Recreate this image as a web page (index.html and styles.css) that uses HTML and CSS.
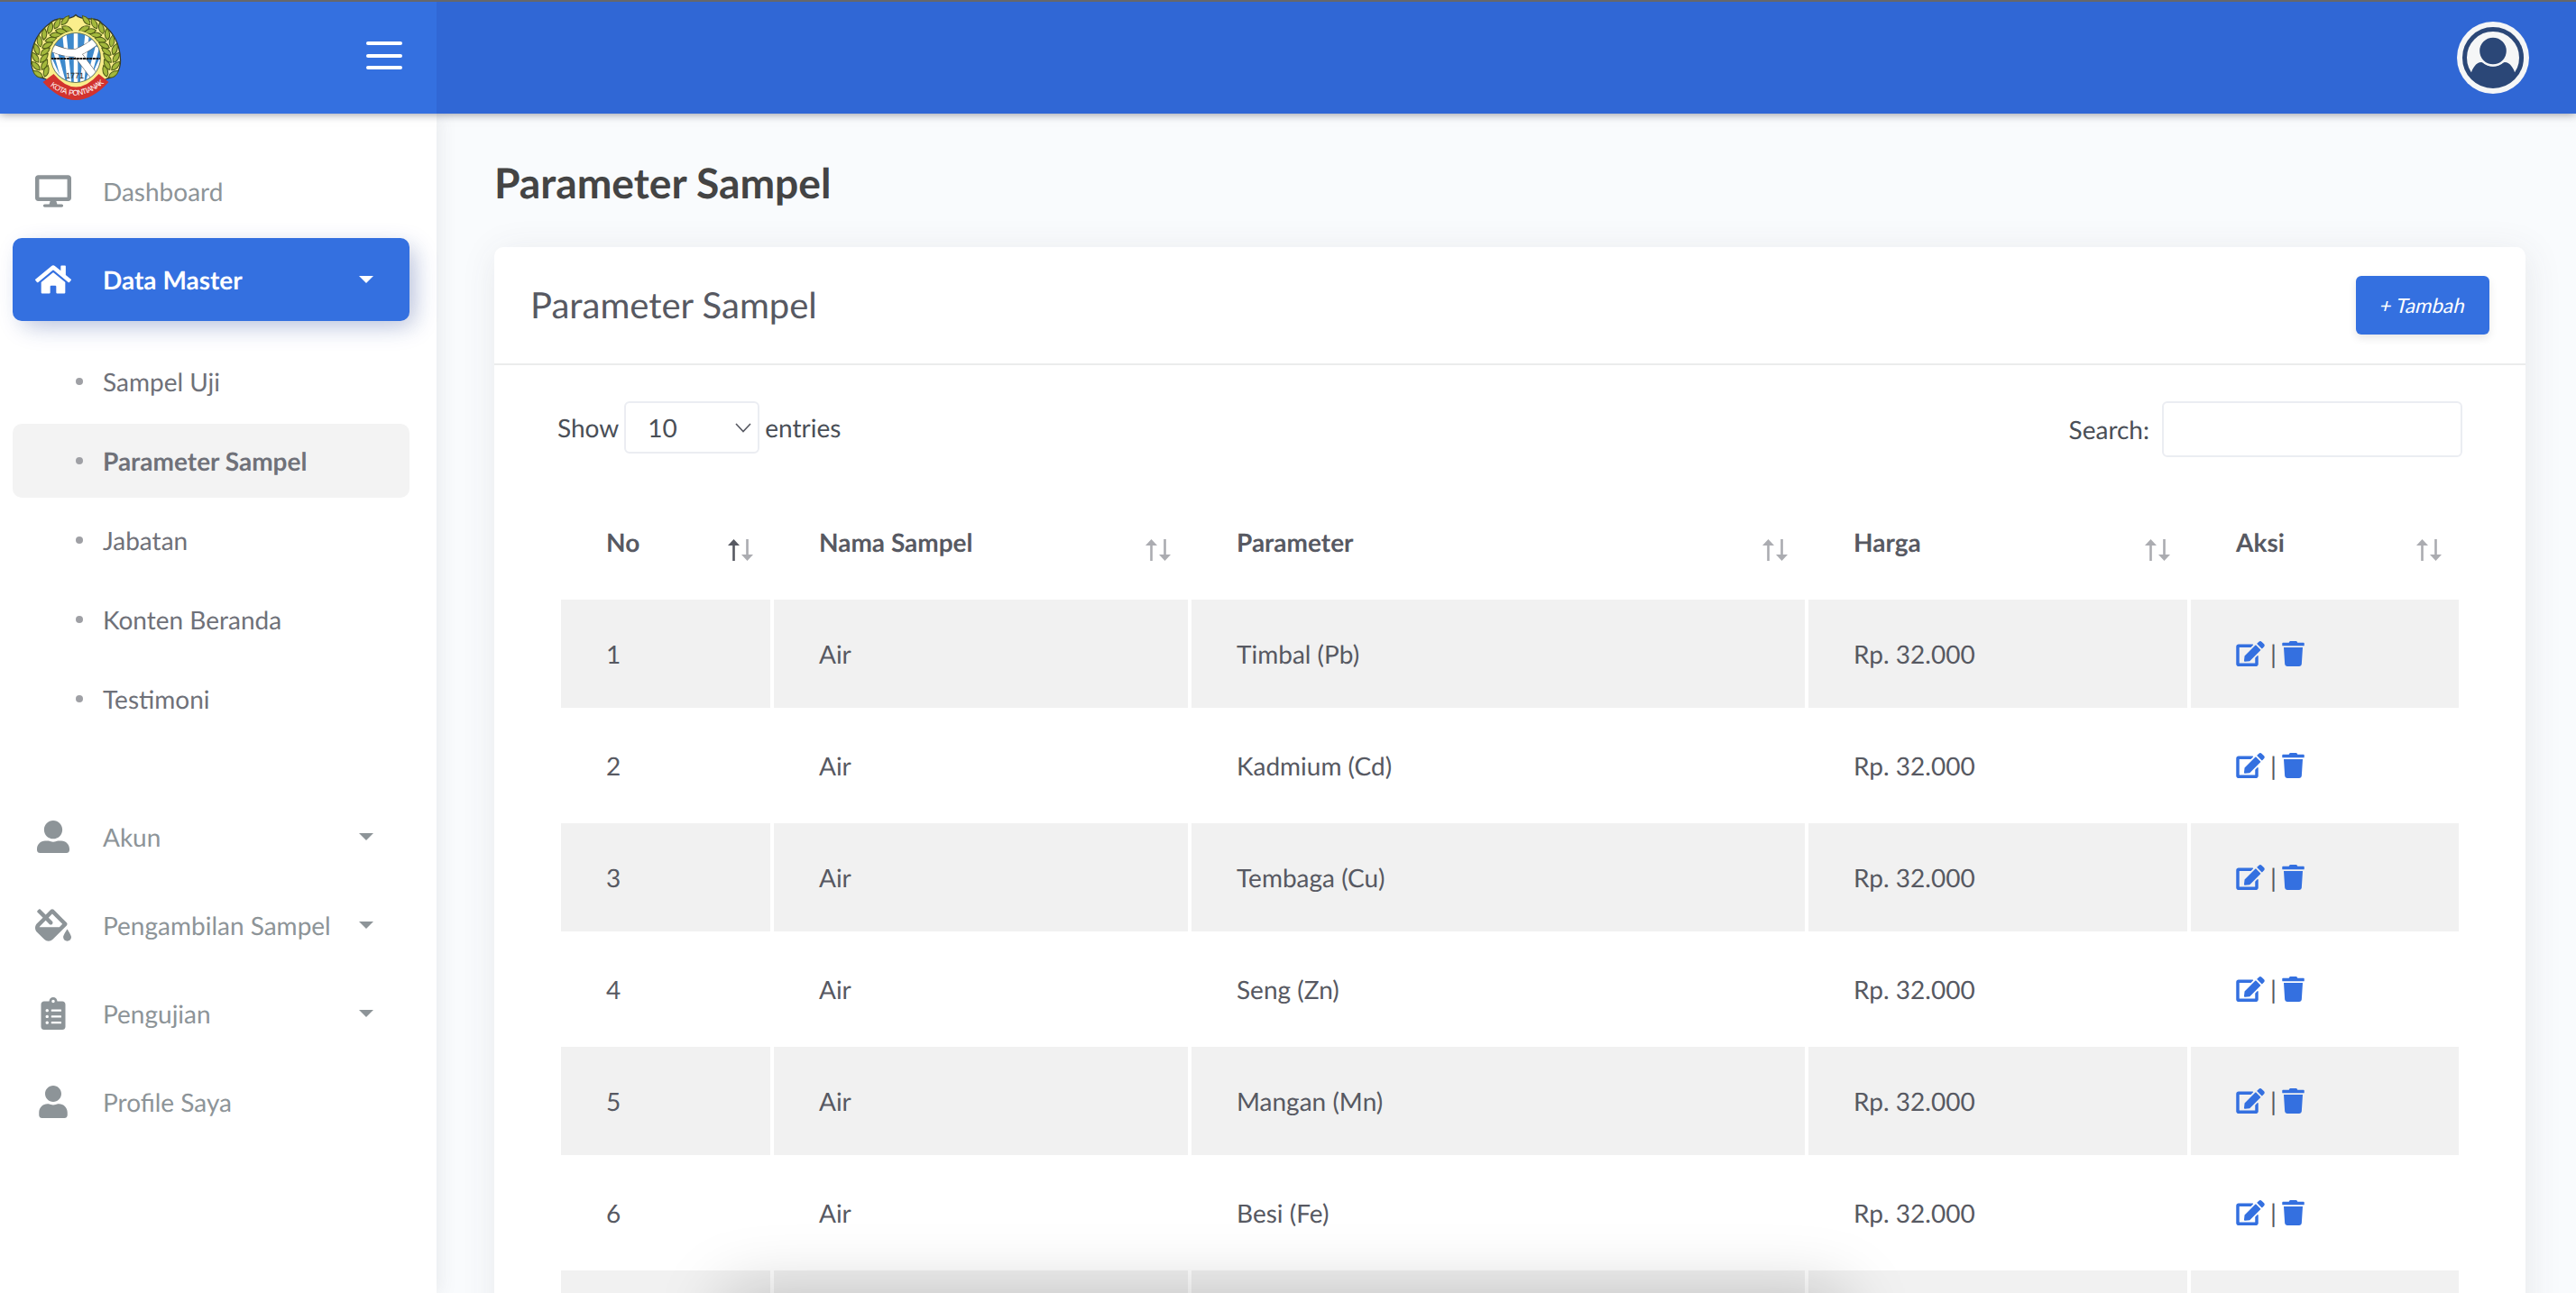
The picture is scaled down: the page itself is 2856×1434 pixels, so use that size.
FILE: index.html
```html
<!DOCTYPE html>
<html lang="id">
<head>
<meta charset="utf-8">
<title>Parameter Sampel</title>
<link rel="stylesheet" href="styles.css">
</head>
<body>
<svg class="defs" width="0" height="0" aria-hidden="true">
  <symbol id="i-desktop" viewBox="0 0 576 512"><path d="M528 0H48C21.5 0 0 21.5 0 48v320c0 26.5 21.5 48 48 48h192l-16 48h-72c-13.3 0-24 10.7-24 24s10.7 24 24 24h272c13.3 0 24-10.7 24-24s-10.7-24-24-24h-72l-16-48h192c26.5 0 48-21.5 48-48V48c0-26.5-21.5-48-48-48zm-16 352H64V64h448v288z"/></symbol>
  <symbol id="i-home" viewBox="0 0 576 512"><path d="M280.37 148.26L96 300.11V464a16 16 0 0 0 16 16l112.06-.29a16 16 0 0 0 15.92-16V368a16 16 0 0 1 16-16h64a16 16 0 0 1 16 16v95.64a16 16 0 0 0 16 16.05L464 480a16 16 0 0 0 16-16V300L295.67 148.26a12.19 12.19 0 0 0-15.3 0zM571.6 251.47L488 182.56V44.05a12 12 0 0 0-12-12h-56a12 12 0 0 0-12 12v72.61L318.47 43a48 48 0 0 0-61 0L4.34 251.47a12 12 0 0 0-1.6 16.9l25.5 31A12 12 0 0 0 45.15 301l235.22-193.74a12.19 12.19 0 0 1 15.3 0L530.9 301a12 12 0 0 0 16.9-1.6l25.5-31a12 12 0 0 0-1.7-16.93z"/></symbol>
  <symbol id="i-user-alt" viewBox="0 0 512 512"><path d="M256 288c79.5 0 144-64.5 144-144S335.5 0 256 0 112 64.5 112 144s64.5 144 144 144zm128 32h-55.1c-22.2 10.2-46.9 16-72.9 16s-50.6-5.8-72.9-16H128C57.3 320 0 377.3 0 448v16c0 26.5 21.5 48 48 48h416c26.5 0 48-21.5 48-48v-16c0-70.7-57.3-128-128-128z"/></symbol>
  <symbol id="i-user" viewBox="0 0 448 512"><path d="M224 256c70.7 0 128-57.3 128-128S294.7 0 224 0 96 57.3 96 128s57.3 128 128 128zm89.6 32h-16.7c-22.2 10.2-46.9 16-72.9 16s-50.6-5.8-72.9-16h-16.7C60.2 288 0 348.2 0 422.4V464c0 26.5 21.5 48 48 48h352c26.5 0 48-21.5 48-48v-41.6c0-74.2-60.2-134.4-134.4-134.4z"/></symbol>
  <symbol id="i-fill" viewBox="0 0 576 512"><path d="M512 320s-64 92.65-64 128c0 35.35 28.66 64 64 64s64-28.65 64-64-64-128-64-128zm-9.37-102.94L294.94 9.37C288.69 3.12 280.5 0 272.31 0s-16.38 3.12-22.62 9.37l-81.58 81.58L81.93 4.76c-6.25-6.25-16.38-6.25-22.62 0L36.69 27.38c-6.24 6.25-6.24 16.38 0 22.62l86.19 86.18-94.76 94.76c-37.49 37.48-37.49 98.26 0 135.75l117.19 117.19c18.74 18.74 43.31 28.12 67.87 28.12 24.57 0 49.13-9.37 67.87-28.12l221.57-221.57c12.5-12.5 12.5-32.75.01-45.25zm-116.22 70.97H65.93c1.36-3.84 3.57-7.98 7.43-11.83l13.15-13.15 81.61-81.61 58.6 58.6c12.49 12.49 32.75 12.49 45.24 0s12.49-32.75 0-45.24l-58.6-58.6 58.95-58.95 162.44 162.44-48.34 48.34z"/></symbol>
  <symbol id="i-clipboard" viewBox="0 0 384 512"><path d="M336 64h-80c0-35.3-28.7-64-64-64s-64 28.7-64 64H48C21.5 64 0 85.5 0 112v352c0 26.5 21.5 48 48 48h288c26.5 0 48-21.5 48-48V112c0-26.5-21.5-48-48-48zM96 424c-13.3 0-24-10.7-24-24s10.7-24 24-24 24 10.7 24 24-10.7 24-24 24zm0-96c-13.3 0-24-10.7-24-24s10.7-24 24-24 24 10.7 24 24-10.7 24-24 24zm0-96c-13.3 0-24-10.7-24-24s10.7-24 24-24 24 10.7 24 24-10.7 24-24 24zm96-192c13.3 0 24 10.7 24 24s-10.7 24-24 24-24-10.7-24-24 10.7-24 24-24zm128 368c0 4.4-3.6 8-8 8H168c-4.4 0-8-3.6-8-8v-16c0-4.4 3.6-8 8-8h144c4.4 0 8 3.6 8 8v16zm0-96c0 4.4-3.6 8-8 8H168c-4.4 0-8-3.6-8-8v-16c0-4.4 3.6-8 8-8h144c4.4 0 8 3.6 8 8v16zm0-96c0 4.4-3.6 8-8 8H168c-4.4 0-8-3.6-8-8v-16c0-4.4 3.6-8 8-8h144c4.4 0 8 3.6 8 8v16z"/></symbol>
  <symbol id="i-edit" viewBox="0 0 576 512"><path d="M402.6 83.2l90.2 90.2c3.8 3.8 3.8 10 0 13.8L274.4 405.6l-92.8 10.3c-12.4 1.4-22.9-9.1-21.5-21.5l10.3-92.8L388.8 83.2c3.8-3.8 10-3.8 13.8 0zm162-22.9l-48.8-48.8c-15.2-15.2-39.9-15.2-55.2 0l-35.4 35.4c-3.8 3.8-3.8 10 0 13.8l90.2 90.2c3.8 3.8 10 3.8 13.8 0l35.4-35.4c15.2-15.3 15.2-40 0-55.2zM384 346.2V448H64V128h229.8c3.2 0 6.2-1.3 8.5-3.5l40-40c7.6-7.6 2.2-20.5-8.5-20.5H48C21.5 64 0 85.5 0 112v352c0 26.5 21.5 48 48 48h352c26.5 0 48-21.5 48-48V306.2c0-10.7-12.9-16-20.5-8.5l-40 40c-2.2 2.3-3.5 5.3-3.5 8.5z"/></symbol>
  <symbol id="i-trash" viewBox="0 0 448 512"><path d="M432 32H312l-9.4-18.7A24 24 0 0 0 281.1 0H166.8a23.72 23.72 0 0 0-21.4 13.3L136 32H16A16 16 0 0 0 0 48v32a16 16 0 0 0 16 16h416a16 16 0 0 0 16-16V48a16 16 0 0 0-16-16zM53.2 467a48 48 0 0 0 47.9 45h245.8a48 48 0 0 0 47.9-45L416 128H32z"/></symbol>
  <symbol id="i-sort" viewBox="0 0 28 24"><path class="up" d="M6.5 0L13 7H7.8V24H5.2V7H0z"/><path class="down" d="M21.5 24L28 17H22.8V0H20.2V17H15z"/></symbol>
</svg>

<header class="topbar">
  <div class="brand">
    <svg class="crest" viewBox="34 15 101 97">
      <defs>
        <path id="leaf" d="M0 0C2-4 8-5 13-2C9 2 4 3 0 0z" fill="#a3b83c" stroke="#4c5a17" stroke-width="1"/>
        <g id="twig"><use href="#leaf" transform="translate(78 25) rotate(-28)"/><use href="#leaf" transform="translate(78 27) scale(1 -1) rotate(-28)"/></g>
        <g id="wreath">
          <use href="#twig" transform="rotate(-14 84 66)"/><use href="#twig" transform="rotate(-26 84 66)"/><use href="#twig" transform="rotate(-38 84 66)"/><use href="#twig" transform="rotate(-50 84 66)"/><use href="#twig" transform="rotate(-62 84 66)"/><use href="#twig" transform="rotate(-74 84 66)"/><use href="#twig" transform="rotate(-86 84 66)"/><use href="#twig" transform="rotate(-98 84 66)"/><use href="#twig" transform="rotate(-110 84 66)"/>
        </g>
        <clipPath id="disc"><circle cx="84" cy="64" r="27"/></clipPath>
        <path id="ribbon-arc" d="M54 94Q84 119 117 91"/>
      </defs>
      <path d="M84 16.500C87 20 92 20.500 100 21C106 21 111 23 113 26C125 35 133 49 133.500 66C134 78 128 85 119 87L84 104L49 87C40 85 34 78 34.500 66C35 49 43 35 55 26C58 23 62 21 68 21C76 20.500 81 20 84 16.500z" fill="#faee8c" stroke="#33392b" stroke-width="1.300"/>
      <use href="#wreath"/>
      <use href="#wreath" transform="translate(168 0) scale(-1 1)"/>
      <circle cx="84" cy="64" r="30" fill="#faee8c"/>
      <circle cx="84" cy="64" r="27.500" fill="#3d89cc" stroke="#6b6f3d" stroke-width=".8"/>
      <g clip-path="url(#disc)" stroke="#fff" stroke-width="4.500" fill="none">
        <path d="M84 34V92M71 34L77 92M97 34L91 92M60 52L71 92M108 52L97 92M54 62L66 88M114 62L102 88"/>
        <path d="M57 53Q76 61 86 58Q98 53 108 44" stroke="#555" stroke-width="9"/>
        <path d="M86 60L104 84" stroke="#555" stroke-width="9"/>
        <path d="M57 53Q76 61 86 58Q98 53 108 44M86 60L104 84" stroke-width="8"/>
        <path d="M56 65H112" stroke="#111" stroke-width="1.800" stroke-dasharray="3 .6"/>
      </g>
      <text x="83" y="86.500" text-anchor="middle" class="crest-year">1771</text>
      <path d="M59.500 82Q84 111 109.500 82L120.500 91Q84 131 47.500 91z" fill="#d2332e"/>
      <text class="crest-name" xml:space="preserve"><textPath href="#ribbon-arc" startOffset="2" textLength="66">KOTA  PONTIANAK</textPath></text>
    </svg>
    <button class="burger" aria-label="Menu"><span></span><span></span><span></span></button>
  </div>
  <div class="navbar">
    <svg class="avatar" viewBox="0 0 80 80">
      <circle cx="40" cy="40" r="40" fill="#f5f6f7"/>
      <circle cx="40" cy="40" r="31.500" fill="none" stroke="#2b4777" stroke-width="5"/>
      <path d="M15 59C17 52 21 45 27 45C30 45 32 49.500 40 49.500S50 45 53 45C59 45 63 52 65 59A33 33 0 0 1 15 59z" fill="#2b4777"/>
      <circle cx="40" cy="32.500" r="16" fill="#2b4777" stroke="#f5f6f7" stroke-width="2.400"/>
    </svg>
  </div>
</header>

<div class="shell">
  <nav class="sidebar">
    <a class="item"><span class="ico"><svg width="40" height="36"><use href="#i-desktop"/></svg></span><span class="label">Dashboard</span></a>
    <a class="item active"><span class="ico"><svg width="40" height="36"><use href="#i-home"/></svg></span><span class="label">Data Master</span><i class="caret"></i></a>
    <div class="sub">
      <a class="subitem">Sampel Uji</a>
      <a class="subitem current">Parameter Sampel</a>
      <a class="subitem">Jabatan</a>
      <a class="subitem">Konten Beranda</a>
      <a class="subitem">Testimoni</a>
    </div>
    <a class="item"><span class="ico"><svg width="36" height="36"><use href="#i-user-alt"/></svg></span><span class="label">Akun</span><i class="caret"></i></a>
    <a class="item"><span class="ico"><svg width="40" height="36"><use href="#i-fill"/></svg></span><span class="label">Pengambilan Sampel</span><i class="caret"></i></a>
    <a class="item"><span class="ico"><svg width="28" height="36"><use href="#i-clipboard"/></svg></span><span class="label">Pengujian</span><i class="caret"></i></a>
    <a class="item"><span class="ico"><svg width="32" height="36"><use href="#i-user"/></svg></span><span class="label">Profile Saya</span></a>
  </nav>

  <main class="content">
    <h1 class="page-title">Parameter Sampel</h1>
    <section class="card">
      <div class="card-head">
        <h2 class="card-title">Parameter Sampel</h2>
        <button class="btn"><span>+ Tambah</span></button>
      </div>
      <div class="controls">
        <div class="length">Show <span class="select">10<svg width="18" height="11" viewBox="0 0 18 11"><path d="M1 1L9 9.500L17 1" fill="none" stroke="#575962" stroke-width="1.600"/></svg></span> entries</div>
        <label class="search">Search:<input type="text"></label>
      </div>
      <table class="table">
        <colgroup><col class="c-no"><col class="c-name"><col class="c-param"><col class="c-price"><col class="c-act"></colgroup>
        <thead>
          <tr>
            <th><div class="th asc">No<svg width="28" height="24"><use href="#i-sort"/></svg></div></th>
            <th><div class="th">Nama Sampel<svg width="28" height="24"><use href="#i-sort"/></svg></div></th>
            <th><div class="th">Parameter<svg width="28" height="24"><use href="#i-sort"/></svg></div></th>
            <th><div class="th">Harga<svg width="28" height="24"><use href="#i-sort"/></svg></div></th>
            <th><div class="th">Aksi<svg width="28" height="24"><use href="#i-sort"/></svg></div></th>
          </tr>
        </thead>
        <tbody>
          <tr><td>1</td><td>Air</td><td>Timbal (Pb)</td><td>Rp. 32.000</td><td><div class="acts"><svg width="32" height="28"><use href="#i-edit"/></svg><span>|</span><svg width="25" height="28"><use href="#i-trash"/></svg></div></td></tr>
          <tr><td>2</td><td>Air</td><td>Kadmium (Cd)</td><td>Rp. 32.000</td><td><div class="acts"><svg width="32" height="28"><use href="#i-edit"/></svg><span>|</span><svg width="25" height="28"><use href="#i-trash"/></svg></div></td></tr>
          <tr><td>3</td><td>Air</td><td>Tembaga (Cu)</td><td>Rp. 32.000</td><td><div class="acts"><svg width="32" height="28"><use href="#i-edit"/></svg><span>|</span><svg width="25" height="28"><use href="#i-trash"/></svg></div></td></tr>
          <tr><td>4</td><td>Air</td><td>Seng (Zn)</td><td>Rp. 32.000</td><td><div class="acts"><svg width="32" height="28"><use href="#i-edit"/></svg><span>|</span><svg width="25" height="28"><use href="#i-trash"/></svg></div></td></tr>
          <tr><td>5</td><td>Air</td><td>Mangan (Mn)</td><td>Rp. 32.000</td><td><div class="acts"><svg width="32" height="28"><use href="#i-edit"/></svg><span>|</span><svg width="25" height="28"><use href="#i-trash"/></svg></div></td></tr>
          <tr><td>6</td><td>Air</td><td>Besi (Fe)</td><td>Rp. 32.000</td><td><div class="acts"><svg width="32" height="28"><use href="#i-edit"/></svg><span>|</span><svg width="25" height="28"><use href="#i-trash"/></svg></div></td></tr>
          <tr><td></td><td></td><td></td><td></td><td></td></tr>
        </tbody>
      </table>
    </section>
  </main>
</div>
<div class="dock-shadow"></div>
</body>
</html>
```
FILE: styles.css
```css
* { box-sizing: border-box; }

html, body { height: 100%; }

body {
  margin: 0;
  display: flex;
  flex-direction: column;
  position: relative;
  overflow: hidden;
  border-top: 2px solid #66676b;
  background: #f9fbfd;
  color: #575962;
  font: 28px/42px Lato, "Liberation Sans", sans-serif;
  text-rendering: geometricPrecision;
}

.defs { position: absolute; }
svg { display: block; fill: currentColor; flex: none; }

.topbar {
  position: relative;
  z-index: 3;
  display: flex;
  flex: none;
  height: 124px;
  box-shadow: 0 0 10px rgba(18, 23, 39, .5);
}
.brand {
  display: flex;
  justify-content: space-between;
  width: 484px;
  padding: 13px 38px 0 34px;
  background: #3470e0;
}
.crest { width: 101px; height: 97px; }
.crest-year { font: 9px "Liberation Sans", sans-serif; fill: #222; }
.crest-name { font: 8.500px "Liberation Sans", sans-serif; fill: #fff; white-space: pre; }
.burger {
  display: flex;
  flex-direction: column;
  gap: 9.600px;
  width: 40px;
  height: 32px;
  margin-top: 31px;
  padding: 0;
  border: 0;
  background: none;
}
.burger span { height: 4px; border-radius: 2px; background: #fff; }
.navbar {
  flex: 1;
  display: flex;
  justify-content: flex-end;
  padding: 22px 52px 0 0;
  background: #3067d5;
}
.avatar { width: 80px; height: 80px; }

.shell { display: flex; flex: 1; min-height: 0; }

.sidebar {
  position: relative;
  z-index: 1;
  flex: none;
  width: 484px;
  padding: 40px 30px 0 14px;
  background: #fff;
  box-shadow: 2px 2px 20px rgba(69, 65, 78, .1);
}
.item {
  display: flex;
  align-items: center;
  height: 92px;
  margin-bottom: 6px;
  padding-right: 40px;
  border-radius: 10px;
  color: #8d9498;
}
.ico { display: flex; justify-content: center; flex: none; width: 90px; margin-right: 10px; padding-bottom: 1px; }
.label { flex: 1; white-space: nowrap; }
.item.active {
  background: #3470e0;
  color: #fff;
  font-weight: 700;
  box-shadow: 8px 8px 20px rgba(0, 0, 0, .06), 8px 8px 30px -6px rgba(21, 60, 180, .3);
}
.caret {
  border: 8px solid transparent;
  border-top-color: currentColor;
  border-bottom: 0;
}
.sub { padding: 20px 0 60px; }
.subitem {
  display: flex;
  align-items: center;
  height: 82px;
  margin-bottom: 6px;
  padding-left: 70px;
  border-radius: 10px;
  color: #6f7179;
}
.subitem::before {
  content: "";
  width: 8px;
  height: 8px;
  margin-right: 22px;
  border-radius: 50%;
  background: #9fa0a5;
}
.subitem.current { background: #f3f3f3; font-weight: 700; }

.content { flex: 1; padding: 48px 56px 0 64px; }
.page-title { margin: 0 0 44px; font-size: 46.200px; line-height: 56px; font-weight: 700; color: #444; }
.card {
  height: 1300px;
  border-radius: 10px;
  background: #fff;
  box-shadow: 2px 6px 40px rgba(69, 65, 78, .1);
}
.card-head {
  display: flex;
  justify-content: space-between;
  align-items: center;
  height: 131px;
  padding: 0 40px;
  border-bottom: 2px solid #ebecec;
}
.card-title { margin: 0; padding-bottom: 2px; font-size: 40px; line-height: 56px; font-weight: 400; }
.btn {
  width: 148px;
  height: 65px;
  padding: 0;
  border: 0;
  border-radius: 6px;
  background: #3470e0;
  color: #fff;
  font: 22.400px/32px Lato, sans-serif;
  box-shadow: 0 4px 10px rgba(0, 0, 0, .1);
}
.btn span { display: inline-block; transform: skewX(-14deg); }

.controls { display: flex; justify-content: space-between; padding: 40px 70px 0; color: #4a4f57; }
.length { display: flex; align-items: center; gap: 6px; height: 58px; }
.select {
  display: flex;
  align-items: center;
  justify-content: space-between;
  width: 150px;
  height: 58px;
  padding: 0 7px 0 24px;
  border: 2px solid #ebedf2;
  border-radius: 6px;
}
.search { display: flex; align-items: center; gap: 14px; height: 62px; }
.search input { width: 333px; height: 62px; border: 2px solid #ebedf2; border-radius: 6px; background: #fff; }

.table { table-layout: fixed; width: 2112px; margin: 30px 0 0 70px; border-spacing: 4px; }
.c-no { width: 232px; }
.c-name { width: 459px; }
.c-param { width: 680px; }
.c-price { width: 420px; }
.c-act { width: 297px; }
th, td { padding: 0 0 0 50px; text-align: left; height: 120px; }
th { font-weight: 700; }
.th { display: flex; align-items: center; justify-content: space-between; padding-right: 19px; }
.th svg { margin-top: 18px; }
.up, .down { fill: #abacb1; }
.asc { --up: #575962; }
.up { fill: var(--up, #abacb1); }
tbody tr:nth-child(odd) td { background: #f1f1f1; }
.acts { display: flex; align-items: center; }
.acts svg { color: #3470e0; }
.acts span { width: 19px; text-align: center; }

/* shade rising from below the lower window edge */
.dock-shadow {
  position: absolute;
  z-index: 4;
  left: 805px;
  right: 811px;
  top: 100%;
  height: 100px;
  box-shadow: 0 0 76px rgba(0, 0, 0, .22);
}
```
